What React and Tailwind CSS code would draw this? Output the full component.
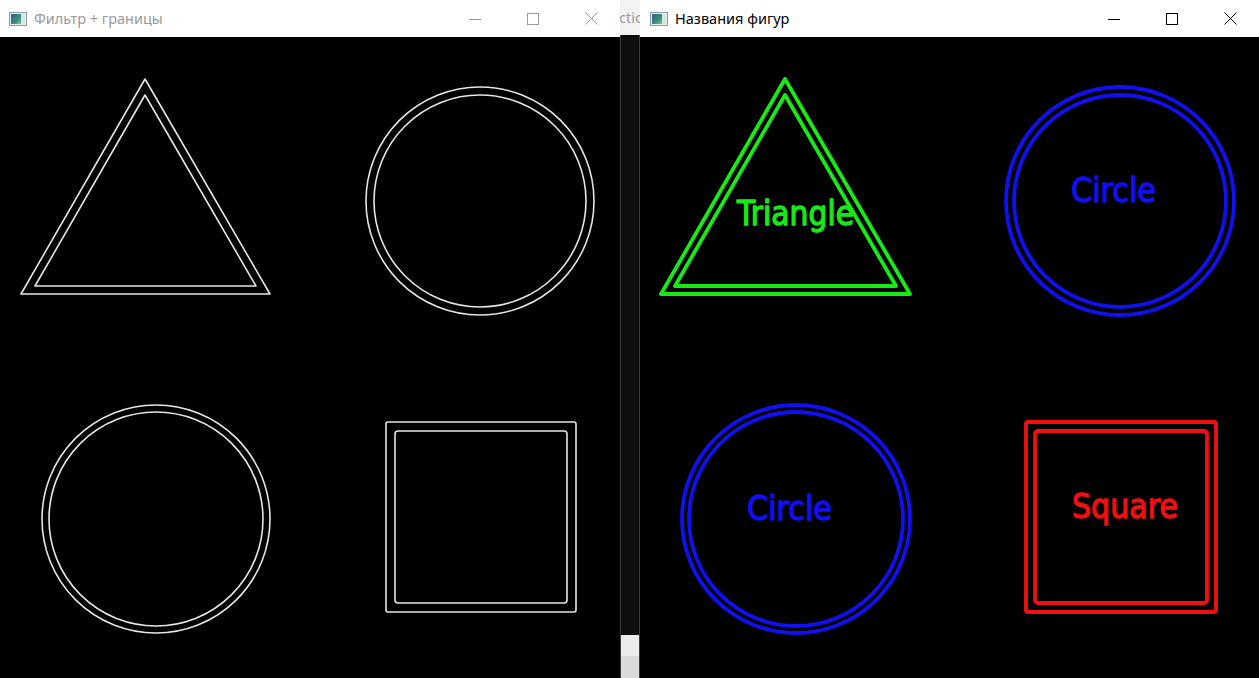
import React from 'react';

const font = { fontFamily: '"Noto Sans", "Open Sans", sans-serif' };

const WinIcon = () => (
    <svg width="18" height="14" viewBox="0 0 18 14">
        <defs>
            <linearGradient id="wi" x1="0" y1="0" x2="1" y2="1">
                <stop offset="0" stopColor="#2f5d8a" />
                <stop offset="0.6" stopColor="#3a8f7a" />
                <stop offset="1" stopColor="#7cc0a0" />
            </linearGradient>
        </defs>
        <rect x="0.5" y="0.5" width="17" height="13" fill="#e8eef0" stroke="#8a9aa4" />
        <rect x="2" y="2" width="10" height="10" fill="url(#wi)" />
        <rect x="12" y="2" width="4" height="10" fill="#d5e6df" />
    </svg>
);

const Caption = ({ active }) => {
    const c = active ? '#000000' : '#9a9a9a';
    return (
        <div className="flex h-full">
            <div className="w-[58px] h-full flex items-center justify-center">
                <svg width="12" height="12" viewBox="0 0 12 12">
                    <line x1="0" y1="6.5" x2="12" y2="6.5" stroke={c} strokeWidth="1" />
                </svg>
            </div>
            <div className="w-[58px] h-full flex items-center justify-center">
                <svg width="12" height="12" viewBox="0 0 12 12">
                    <rect x="0.5" y="0.5" width="11" height="11" fill="none" stroke={c} strokeWidth="1" />
                </svg>
            </div>
            <div className="w-[58px] h-full flex items-center justify-center">
                <svg width="13" height="13" viewBox="0 0 13 13">
                    <path d="M0.5 0.5 L12.5 12.5 M12.5 0.5 L0.5 12.5" stroke={c} strokeWidth="1" />
                </svg>
            </div>
        </div>
    );
};

const TitleBar = ({ title, active, pl }) => (
    <div className="h-[37px] bg-white flex items-center shrink-0">
        <div className={`flex items-center flex-1 ${pl}`}>
            <WinIcon />
            <span
                className={`ml-[7px] text-[14.5px] ${active ? 'text-black' : 'text-[#9a9a9a]'}`}
                style={font}
            >
                {title}
            </span>
        </div>
        <Caption active={active} />
    </div>
);

const Shapes = ({ dx, color, sw }) => {
    const c = (k) => color ? color[k] : '#e6e6e6';
    return (
        <g fill="none" strokeLinejoin="round" strokeWidth={sw}>
            <polygon points={`${145 + dx},79 ${21 + dx},294 ${270 + dx},294`} stroke={c('t')} />
            <polygon points={`${145 + dx},95 ${35 + dx},286 ${256 + dx},286`} stroke={c('t')} />
            <circle cx={480 + dx} cy="201" r="114" stroke={c('c')} />
            <circle cx={480 + dx} cy="201" r="106" stroke={c('c')} />
            <circle cx={156 + dx} cy="519" r="114" stroke={c('c')} />
            <circle cx={156 + dx} cy="519" r="107" stroke={c('c')} />
            <rect x={386 + dx} y="422" width="190" height="190" rx="2" stroke={c('s')} />
            <rect x={395 + dx} y="431" width="172" height="172" rx="3" stroke={c('s')} />
        </g>
    );
};

const Label = ({ x, y, w, fill, children }) => (
    <text
        x={x}
        y={y}
        fontSize="33"
        textLength={w}
        lengthAdjust="spacingAndGlyphs"
        fill={fill}
        stroke={fill}
        strokeWidth="1.3"
        strokeLinejoin="round"
        fontFamily='"DejaVu Sans", sans-serif'
    >
        {children}
    </text>
);

export default function App() {
    const colors = { t: '#18ea18', c: '#1010f0', s: '#f01010' };

    return (
        <div className="w-[1259px] h-[678px] flex overflow-hidden bg-black">
            {/* left window */}
            <div className="w-[620px] h-full flex flex-col shrink-0">
                <TitleBar title="Фильтр + границы" active={false} pl="pl-[9px]" />
                <div className="flex-1 bg-black">
                    <svg width="620" height="641" viewBox="0 37 620 641">
                        <Shapes dx={0} sw={1.6} />
                    </svg>
                </div>
            </div>

            {/* window behind, visible in the gap */}
            <div className="w-[20px] h-full flex flex-col shrink-0">
                <div className="h-[35px] bg-[#f3f3f3] overflow-hidden flex items-center">
                    <span className="text-[14.5px] text-[#9a9a9a] whitespace-nowrap -ml-[1px]" style={font}>
                        ctic
                    </span>
                </div>
                <div className="flex-1 bg-[#0e0e0e] border-x border-[#3a3a3a] flex flex-col justify-end">
                    <div className="h-[43px] flex flex-col">
                        <div className="h-[21px] bg-[#ececec]" />
                        <div className="flex-1 bg-[#dadada]" />
                    </div>
                </div>
            </div>

            {/* right window */}
            <div className="flex-1 h-full flex flex-col">
                <TitleBar title="Названия фигур" active pl="pl-[10px]" />
                <div className="flex-1 bg-black">
                    <svg width="619" height="641" viewBox="640 37 619 641">
                        <Shapes dx={640} color={colors} sw={3.8} />
                        <Label x={737} y={225} w={117} fill={colors.t}>Triangle</Label>
                        <Label x={1071} y={202} w={85} fill={colors.c}>Circle</Label>
                        <Label x={747} y={520} w={85} fill={colors.c}>Circle</Label>
                        <Label x={1072} y={518} w={106} fill={colors.s}>Square</Label>
                    </svg>
                </div>
            </div>
        </div>
    );
}
